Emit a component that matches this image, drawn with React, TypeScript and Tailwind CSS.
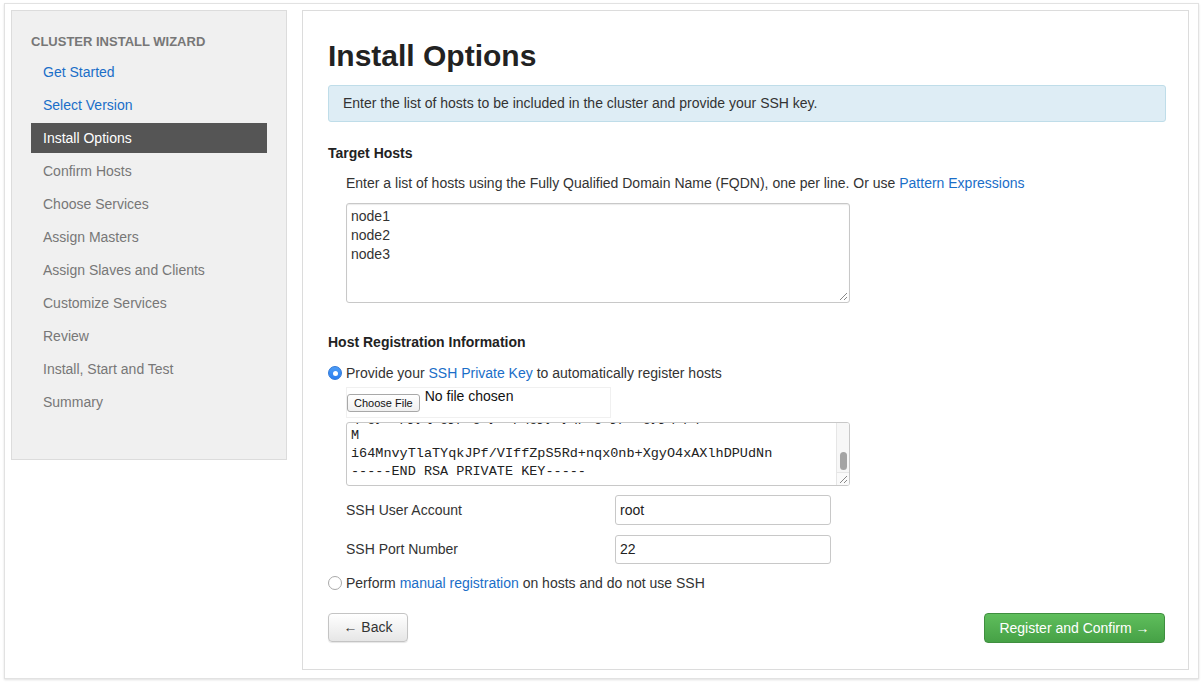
import React from 'react';

const steps = [
  { label: 'Get Started', state: 'done' },
  { label: 'Select Version', state: 'done' },
  { label: 'Install Options', state: 'active' },
  { label: 'Confirm Hosts', state: 'todo' },
  { label: 'Choose Services', state: 'todo' },
  { label: 'Assign Masters', state: 'todo' },
  { label: 'Assign Slaves and Clients', state: 'todo' },
  { label: 'Customize Services', state: 'todo' },
  { label: 'Review', state: 'todo' },
  { label: 'Install, Start and Test', state: 'todo' },
  { label: 'Summary', state: 'todo' },
];

function ResizeGrip() {
  return (
    <svg className="absolute right-[1px] bottom-[1px]" width="9" height="9" viewBox="0 0 9 9">
      <line x1="1" y1="8" x2="8" y2="1" stroke="#888" strokeWidth="1" />
      <line x1="5" y1="8" x2="8" y2="5" stroke="#888" strokeWidth="1" />
    </svg>
  );
}

function Radio({ checked }: { checked: boolean }) {
  if (checked) {
    return (
      <span className="w-[14px] h-[14px] rounded-full bg-gradient-to-b from-[#4c9cf6] to-[#2a7ef0] border border-[#2f78d8] flex items-center justify-center">
        <span className="w-[5px] h-[5px] rounded-full bg-white" />
      </span>
    );
  }
  return <span className="w-[14px] h-[14px] rounded-full bg-white border border-[#a9a9a9]" />;
}

export default function App() {
  return (
    <div className="w-[1203px] h-[682px] bg-white font-['Liberation_Sans',Arial,sans-serif] text-[14px] text-[#333] overflow-hidden">
      <div className="ml-[4px] mt-[3px] w-[1195px] h-[676px] border border-[#e2e2e2] shadow-[0_1px_2px_rgba(0,0,0,0.12)] p-[6px] flex gap-[14px] items-start">
        {/* sidebar */}
        <div className="w-[276px] h-[450px] bg-[#f0f0f0] border border-[#dcdcdc] pt-[21px] px-[19px]">
          <div className="h-[20px] leading-[20px] text-[13px] font-bold text-[#777] uppercase">
            Cluster Install Wizard
          </div>
          <ul className="mt-[5px]">
            {steps.map((s) => (
              <li
                key={s.label}
                className={
                  'h-[30px] mb-[3px] pl-[12px] flex items-center ' +
                  (s.state === 'active'
                    ? 'bg-[#555555] text-white'
                    : s.state === 'done'
                    ? 'text-[#1a6ec8]'
                    : 'text-[#777]')
                }
              >
                {s.label}
              </li>
            ))}
          </ul>
        </div>

        {/* main panel */}
        <div className="ml-[1px] w-[887px] h-[660px] bg-white border border-[#dcdcdc] pt-[25px] pl-[25px] pr-[22px]">
          <h2 className="text-[30px] leading-[40px] font-bold text-[#222]">Install Options</h2>
          <div className="mt-[9px] h-[37px] bg-[#deedf5] border border-[#bfdde9] rounded-[3px] px-[14px] flex items-center text-[#333]">
            Enter the list of hosts to be included in the cluster and provide your SSH key.
          </div>

          <div className="mt-[21px] h-[20px] leading-[20px] font-bold text-[#222]">Target Hosts</div>
          <div className="mt-[10px] ml-[18px] h-[20px] leading-[20px]">
            Enter a list of hosts using the Fully Qualified Domain Name (FQDN), one per line. Or use{' '}
            <span className="text-[#1a6ec8]">Pattern Expressions</span>
          </div>
          <div className="relative mt-[10px] ml-[18px] w-[504px] h-[100px] border border-[#c8c8c8] rounded-[3px] shadow-[inset_0_1px_1px_rgba(0,0,0,0.08)] px-[4px] pt-[3px] leading-[19px] text-[#333]">
            <div>node1</div>
            <div>node2</div>
            <div>node3</div>
            <ResizeGrip />
          </div>

          <div className="mt-[29px] h-[20px] leading-[20px] font-bold text-[#222]">Host Registration Information</div>
          <div className="mt-[11px] h-[20px] flex items-center gap-[4px]">
            <Radio checked />
            <span>
              Provide your <span className="text-[#1a6ec8]">SSH Private Key</span> to automatically register hosts
            </span>
          </div>

          <div className="ml-[18px]">
            <div className="mt-[4px] w-[265px] h-[31px] border border-[#f0f0f0] flex items-start">
              <span className="mt-[6px] h-[18px] px-[6px] bg-gradient-to-b from-white to-[#f0f0f0] border border-[#a8a8a8] rounded-[3px] text-[11px] leading-[16px] text-[#111]">
                Choose File
              </span>
              <span className="ml-[5px] mt-[-2px] leading-[20px] text-[#111]">No file chosen</span>
            </div>

            <div className="relative mt-[4px] w-[504px] h-[64px] border border-[#c8c8c8] rounded-[3px] overflow-hidden pl-[4px] font-['Liberation_Mono','Courier_New',monospace] text-[13.5px] leading-[18px] text-[#222]">
              <div className="mt-[-14px]">
                <div>q7gyJ+pjyQ9gjp6g+yJ8pqgjy/yqp4g3jp+Ugyjq9pq</div>
                <div>M</div>
                <div>i64MnvyTlaTYqkJPf/VIffZpS5Rd+nqx0nb+XgyO4xAXlhDPUdNn</div>
                <div>-----END RSA PRIVATE KEY-----</div>
              </div>
              <div className="absolute right-0 top-0 w-[13px] h-full bg-[#f7f7f7] border-l border-[#e6e6e6]">
                <div className="absolute left-[3px] top-[29px] w-[7px] h-[18px] rounded-[4px] bg-[#a4a4a4]" />
              </div>
              <div className="absolute right-0 bottom-0 w-[13px] h-[13px] bg-[#fafafa] border-t border-l border-[#e6e6e6]" />
              <ResizeGrip />
            </div>

            <div className="mt-[9px] flex items-center">
              <span className="w-[269px]">SSH User Account</span>
              <div className="w-[216px] h-[30px] border border-[#c8c8c8] rounded-[3px] px-[4px] flex items-center text-[#222]">root</div>
            </div>
            <div className="mt-[10px] flex items-center">
              <span className="w-[269px]">SSH Port Number</span>
              <div className="w-[216px] h-[29px] border border-[#c8c8c8] rounded-[3px] px-[4px] flex items-center text-[#222]">22</div>
            </div>
          </div>

          <div className="mt-[9px] h-[20px] flex items-center gap-[4px]">
            <Radio checked={false} />
            <span>
              Perform <span className="text-[#1a6ec8]">manual registration</span> on hosts and do not use SSH
            </span>
          </div>

          <div className="mt-[20px] flex justify-between">
            <button className="w-[80px] h-[29px] bg-gradient-to-b from-white to-[#e6e6e6] border border-[#c4c4c4] rounded-[4px] shadow-[0_1px_1px_rgba(0,0,0,0.1)] text-[#333] text-[14px]">
              ← Back
            </button>
            <button className="mr-[1px] w-[181px] h-[30px] bg-gradient-to-b from-[#5fbe5c] to-[#46a146] border border-[#3f8f3f] rounded-[4px] text-white text-[14px]">
              Register and Confirm →
            </button>
          </div>
        </div>
      </div>
    </div>
  );
}
